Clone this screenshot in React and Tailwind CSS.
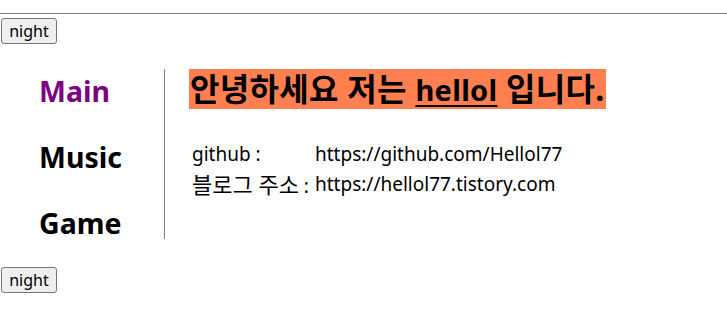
import React from "react";

const font = { fontFamily: '"Noto Sans", "Noto Sans CJK KR", sans-serif' };

function NightButton() {
  return (
    <button className="ml-px h-[26px] w-[56px] rounded-[3px] border border-[#767676] bg-[#efefef] text-[16px] leading-none text-black">
      night
    </button>
  );
}

export default function App() {
  return (
    <div className="min-h-[310px] bg-white pt-[13px] text-black" style={font}>
      <hr className="border-t border-[#808080]" />
      <div className="mt-[4px]">
        <NightButton />
      </div>

      <div className="mt-[25px] flex">
        {/* nav */}
        <div className="flex h-[170px] w-[165px] flex-col border-r border-[#808080] pl-[39px] pt-[4px]">
          <div className="flex flex-col gap-[30px] text-[28.5px] font-bold leading-[36px]">
            <a className="text-[#800080]">Main</a>
            <a>Music</a>
            <a>Game</a>
          </div>
        </div>

        {/* content */}
        <div className="pl-[24px]">
          <h1 className="inline-block h-[40px] bg-[#ff7f50] pl-[1px] pr-[1px] text-[32px] font-bold leading-[40px] tracking-[0.3px]">
            안녕하세요 저는 <u className="text-[29px] underline-offset-4">hellol</u> 입니다.
          </h1>
          <div className="mt-[30px] grid grid-cols-[123px_auto] justify-start pl-[3px] text-[19px] leading-[30px]">
            <span>github :</span>
            <span>https://github.com/Hellol77</span>
            <span className="whitespace-nowrap">
              <span className="text-[22px]">블로그 주소</span> :
            </span>
            <span>https://hellol77.tistory.com</span>
          </div>
        </div>
      </div>

      <div className="mt-[28px]">
        <NightButton />
      </div>
    </div>
  );
}
